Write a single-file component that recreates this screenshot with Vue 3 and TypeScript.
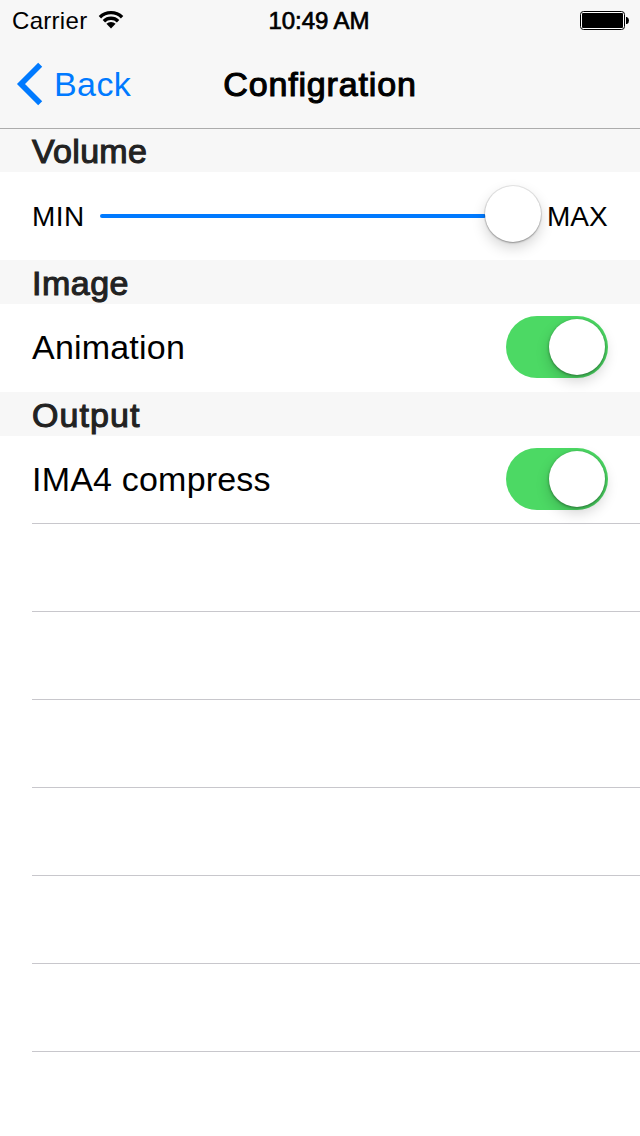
<script setup lang="ts">
import { ref } from 'vue'

interface Toggle {
  section: string
  label: string
  key: string
}

const toggles: Toggle[] = [
  { section: 'Image', label: 'Animation', key: 'image' },
  { section: 'Output', label: 'IMA4 compress', key: 'output' },
]
const enabled = ref<Record<string, boolean>>({ image: true, output: true })
const emptyRows = 7
</script>

<template>
  <div class="screen">
    <header class="top">
      <div class="status">
        <div class="carrier">
          <span class="carrier-name">Carrier</span>
          <svg class="wifi" width="26" height="20" viewBox="0 0 26 20">
            <path d="M0.700 6 A17.500 17.500 0 0 1 25.300 6 L22.900 8.400 A14 14 0 0 0 3.100 8.400 Z" />
            <path d="M4.700 10 A11.800 11.800 0 0 1 21.300 10 L18.900 12.400 A8.300 8.300 0 0 0 7.100 12.400 Z" />
            <path d="M8.400 13.800 A6.500 6.500 0 0 1 17.600 13.800 L13 18.600 Z" />
          </svg>
        </div>
        <span class="time">10:49 AM</span>
        <svg class="battery" width="50" height="20" viewBox="0 0 50 20">
          <rect x="0.5" y="0.5" width="44" height="18" rx="3" fill="#fff" stroke="#000" />
          <rect x="2" y="2" width="41" height="15" rx="1" />
          <path d="M46 6 h1 q2 1 2 3.500 t-2 3.500 h-1 z" />
        </svg>
      </div>
      <nav class="nav">
        <button class="back" type="button">
          <svg class="chevron" width="30" height="44" viewBox="0 0 30 44">
            <path d="M26.200 2.800 L7 22 L26.200 41.200" />
          </svg>
          <span class="back-label">Back</span>
        </button>
        <h1 class="title">Configration</h1>
      </nav>
    </header>

    <main>
      <h2 class="section first volume">Volume</h2>
      <div class="row slider-row">
        <span class="min">MIN</span>
        <div class="slider">
          <div class="track"></div>
          <div class="knob"></div>
        </div>
        <span class="max">MAX</span>
      </div>

      <template v-for="item in toggles" :key="item.key">
        <h2 class="section" :class="item.key">{{ item.section }}</h2>
        <div class="row">
          <span class="label">{{ item.label }}</span>
          <button
            class="switch"
            :class="{ on: enabled[item.key] }"
            type="button"
            @click="enabled[item.key] = !enabled[item.key]"
          >
            <span class="knob"></span>
          </button>
        </div>
      </template>

      <div v-for="n in emptyRows" :key="n" class="empty"></div>
    </main>
  </div>
</template>

<style>
body {
  margin: 0;
  background: #fff;
}
</style>

<style scoped>
.screen {
  width: 640px;
  height: 1136px;
  overflow: hidden;
  background: #fff;
  color: #000;
  font-family: "Liberation Sans", Arial, sans-serif;
}
.top {
  box-sizing: border-box;
  height: 129px;
  background: #f7f7f7;
  border-bottom: 1px solid #acacac;
}
.status {
  display: grid;
  grid-template-columns: 1fr auto 1fr;
  height: 40px;
  align-items: start;
  font-size: 24px;
  line-height: 28px;
}
.carrier {
  display: flex;
  padding: 7px 0 0 12px;
}
.carrier-name {
  width: 86px;
  letter-spacing: 0.3px;
}
.wifi {
  margin: 3px 0 0 -0.5px;
}
.time {
  padding: 7px 2px 0 0;
  letter-spacing: -0.05px;
  -webkit-text-stroke: 0.7px #000;
}
.battery {
  justify-self: end;
  margin: 11px 10px 0 0;
}
.nav {
  display: grid;
  grid-template-columns: 1fr auto 1fr;
  height: 88px;
  align-items: center;
}
.back {
  display: flex;
  align-items: center;
  padding: 0 0 0 14px;
  border: 0;
  background: none;
  color: #007aff;
  font: 34px/40px "Liberation Sans", Arial, sans-serif;
}
.back-label {
  margin-left: 10px;
  letter-spacing: 0.4px;
}
.chevron path {
  fill: none;
  stroke: #007aff;
  stroke-width: 5.7;
}
.title,
.section {
  margin: 0;
  font-size: 34px;
  font-weight: 400;
}
.title {
  line-height: 40px;
  letter-spacing: 0.85px;
  -webkit-text-stroke: 1.1px #000;
}
.section {
  height: 44px;
  padding-left: 32px;
  background: #f7f7f7;
  color: #222;
  line-height: 46px;
  -webkit-text-stroke: 1.1px #222;
}
.first {
  height: 43px;
  line-height: 45px;
}
.volume {
  letter-spacing: 0.3px;
}
.image {
  letter-spacing: 0.5px;
}
.output {
  letter-spacing: 1.1px;
}
.row {
  box-sizing: border-box;
  display: flex;
  align-items: center;
  height: 88px;
  padding: 0 32px;
}
.label {
  flex: 1;
  padding-bottom: 2px;
  font-size: 34px;
  letter-spacing: 0.2px;
}
.slider-row {
  font-size: 28px;
}
.min {
  width: 68px;
  padding-top: 2px;
  letter-spacing: 0.4px;
}
.slider {
  display: flex;
  align-items: center;
  width: 441px;
}
.track {
  flex: 1;
  height: 4px;
  border-radius: 2px;
  background: #007aff;
}
.knob {
  flex: none;
  width: 56px;
  height: 56px;
  border-radius: 50%;
  background: #fff;
}
.slider .knob {
  margin: 0 0 4px -1px;
  box-shadow: 0 0 0 1px rgba(0, 0, 0, 0.08), 0 1px 2px rgba(0, 0, 0, 0.3), 0 6px 14px rgba(0, 0, 0, 0.17);
}
.max {
  margin-left: 6px;
  padding-top: 2px;
}
.switch {
  display: flex;
  box-sizing: border-box;
  width: 102px;
  height: 62px;
  margin-top: -2px;
  padding: 3px;
  border: 0;
  border-radius: 31px;
  background: #e5e5e5;
}
.switch.on {
  justify-content: flex-end;
  background: #4cd964;
}
.switch .knob {
  box-shadow: 0 1px 3px rgba(0, 0, 0, 0.4), 0 6px 14px rgba(0, 0, 0, 0.18);
}
.empty {
  height: 87px;
  margin-left: 32px;
  border-top: 1px solid #c8c7cc;
}
.row + .empty {
  margin-top: -1px;
}
</style>
